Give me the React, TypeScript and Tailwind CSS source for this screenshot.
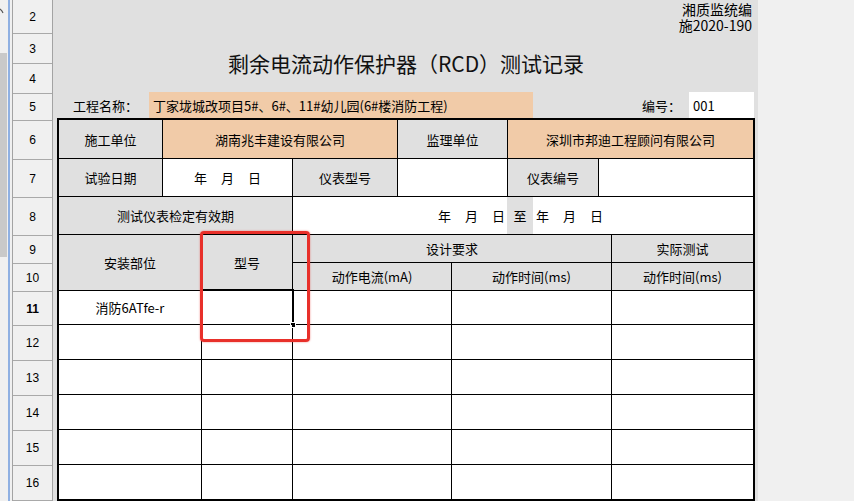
import React from "react";

const rowHeads: { n: number; h: string; bold?: boolean }[] = [
  { n: 2, h: "h-[34px]" },
  { n: 3, h: "h-[30px]" },
  { n: 4, h: "h-[30px]" },
  { n: 5, h: "h-[27px]" },
  { n: 6, h: "h-[39px]" },
  { n: 7, h: "h-[38px]" },
  { n: 8, h: "h-[38px]" },
  { n: 9, h: "h-[28px]" },
  { n: 10, h: "h-[28px]" },
  { n: 11, h: "h-[34px]", bold: true },
  { n: 12, h: "h-[35px]" },
  { n: 13, h: "h-[35px]" },
  { n: 14, h: "h-[35px]" },
  { n: 15, h: "h-[35px]" },
  { n: 16, h: "h-[35px]" },
];

const grey = "bg-[#e0e0e0]";
const orange = "bg-[#f1cba8]";

function Cell({
  className = "",
  children,
}: {
  className?: string;
  children?: React.ReactNode;
}) {
  return (
    <div
      className={`flex items-center justify-center text-[13px] leading-none text-black ${className}`}
    >
      {children}
    </div>
  );
}

function Ymd({ className = "" }: { className?: string }) {
  return (
    <span className={`flex gap-[14px] ${className}`}>
      <span>年</span>
      <span>月</span>
      <span>日</span>
    </span>
  );
}

export default function App() {
  return (
    <div className="relative flex h-[501px] w-[854px] overflow-hidden bg-[#f0f0f0] font-['Noto_Sans_CJK_SC',sans-serif]">
      {/* left edge: scroll thumb + frozen pane line */}
      <div className="flex w-[12px] shrink-0">
        <div className="flex w-[8px] flex-col">
          <svg width="8" height="53" viewBox="0 0 8 53" className="shrink-0">
            <polyline points="0,9 2,11 3,13" fill="none" stroke="#555" strokeWidth="1.2" />
          </svg>
          <div className="h-[204px] w-[7px] bg-[#c9c9c9]" />
        </div>
        <div className="w-[2px] bg-[#8fb0e2]" />
      </div>

      {/* row headers */}
      <div className="flex w-[41px] shrink-0 flex-col border-x border-[#a3a3a3] bg-[#f0f0f0]">
        {rowHeads.map((r) => (
          <div
            key={r.n}
            className={`flex shrink-0 items-center justify-center border-b border-[#a9a9a9] font-['Liberation_Sans',sans-serif] text-[12px] text-black ${r.h} ${r.bold ? "font-bold" : ""}`}
          >
            {r.n}
          </div>
        ))}
      </div>

      {/* sheet */}
      <div className="flex w-[705px] shrink-0 flex-col bg-[#e0e0e0]">
        <div className="flex h-[34px] flex-col items-end pr-[6px] pt-[1px] text-[14px] leading-[16px] text-black">
          <span>湘质监统编</span>
          <span>施2020-190</span>
        </div>
        <div className="flex h-[60px] items-center justify-center pl-[4px] pr-[3px] pt-[2px] text-[21px] text-[#111]">
          剩余电流动作保护器（RCD）测试记录
        </div>

        <div className="flex h-[26px] text-[13px] leading-none text-black">
          <div className="flex w-[96px] items-center pl-[20px]">工程名称：</div>
          <div className={`flex w-[384px] items-center pl-[4px] ${orange}`}>
            丁家垅城改项目5#、6#、11#幼儿园(6#楼消防工程)
          </div>
          <div className="flex flex-1 items-center justify-end pr-[8px]">编号：</div>
          <div className="flex w-[65px] items-center bg-white pl-[4px]">001</div>
          <div className="w-[4px]" />
        </div>

        <div className="ml-[4px] grid w-[698px] grid-cols-[103px_38px_90px_104px_53px_55px_25px_64px_12px_141px] grid-rows-[38px_37px_37px_27px_27px_33px_34px_34px_34px_34px_34px] gap-px border-2 border-black bg-black">
          {/* row 6 */}
          <Cell className={grey}>施工单位</Cell>
          <Cell className={`col-span-3 ${orange}`}>湖南兆丰建设有限公司</Cell>
          <Cell className={`col-span-2 ${grey}`}>监理单位</Cell>
          <Cell className={`col-span-4 ${orange}`}>深圳市邦迪工程顾问有限公司</Cell>

          {/* row 7 */}
          <Cell className={grey}>试验日期</Cell>
          <Cell className="col-span-2 bg-white">
            <Ymd />
          </Cell>
          <Cell className={grey}>仪表型号</Cell>
          <Cell className="col-span-2 bg-white" />
          <Cell className={`col-span-2 ${grey}`}>仪表编号</Cell>
          <Cell className="col-span-2 bg-white" />

          {/* row 8 */}
          <Cell className={`col-span-3 ${grey}`}>测试仪表检定有效期</Cell>
          <div className="col-span-7 flex text-[13px] leading-none text-black">
            <div className="flex w-[214px] items-center justify-end bg-white pr-[2px]">
              <Ymd />
            </div>
            <div className={`flex w-[26px] items-center justify-center ${grey}`}>至</div>
            <div className="flex flex-1 items-center bg-white pl-[3px]">
              <Ymd />
            </div>
          </div>

          {/* rows 9-10 */}
          <Cell className={`col-span-2 row-span-2 ${grey}`}>安装部位</Cell>
          <Cell className={`row-span-2 ${grey}`}>型号</Cell>
          <Cell className={`col-span-6 ${grey}`}>设计要求</Cell>
          <Cell className={grey}>实际测试</Cell>
          <Cell className={`col-span-2 ${grey}`}>动作电流(mA)</Cell>
          <Cell className={`col-span-4 ${grey}`}>动作时间(ms)</Cell>
          <Cell className={grey}>动作时间(ms)</Cell>

          {/* data rows */}
          {[0, 1, 2, 3, 4, 5].map((i) => (
            <React.Fragment key={i}>
              <Cell className="col-span-2 bg-white">{i === 0 ? "消防6ATfe-r" : null}</Cell>
              <Cell className="relative bg-white">
                {i === 0 ? (
                  <>
                    <div className="absolute -inset-[2px] border-2 border-black">
                      <div className="h-full w-full border border-white" />
                    </div>
                    <div className="absolute -bottom-[4px] -right-[4px] h-[6px] w-[6px] border border-white bg-black" />
                  </>
                ) : null}
              </Cell>
              <Cell className="col-span-2 bg-white" />
              <Cell className="col-span-4 bg-white" />
              <Cell className="bg-white" />
            </React.Fragment>
          ))}
        </div>
      </div>

      {/* annotation */}
      <div className="pointer-events-none absolute left-[200px] top-[231px] h-[111px] w-[110px] rounded-[4px] border-[3px] border-[#e8302a] shadow-[0_0_2px_rgba(232,48,42,0.6)]" />
    </div>
  );
}
